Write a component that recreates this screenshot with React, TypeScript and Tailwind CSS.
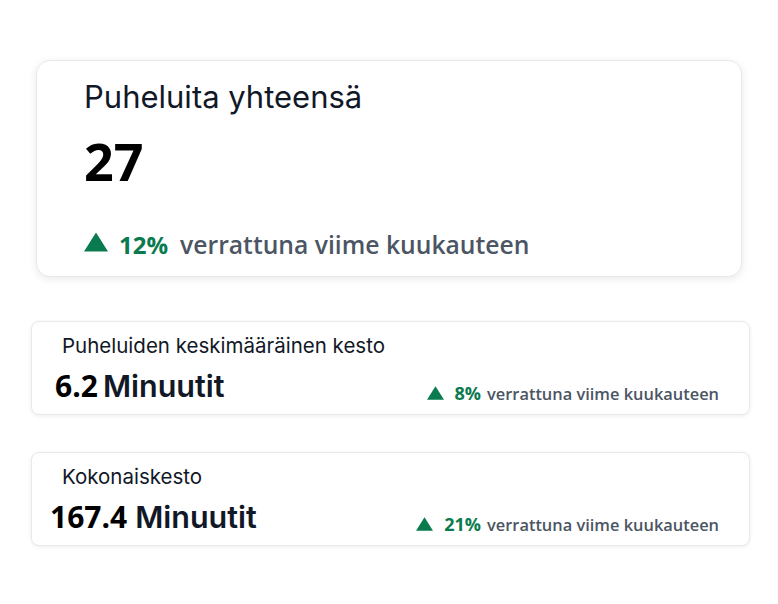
import React from "react";

const sans = { fontFamily: "Inter, 'Noto Sans', sans-serif" };
const open = { fontFamily: "'Open Sans', 'Noto Sans', sans-serif" };

function Up({ className }: { className: string }) {
  return (
    <svg viewBox="0 0 20 16" className={className} aria-hidden>
      <polygon points="10,0 20,16 0,16" fill="#0a7a4f" />
    </svg>
  );
}

type Stat = {
  title: string;
  value: string;
  pct: string;
  valuePad: string;
  gap: string;
};

const stats: Stat[] = [
  { title: "Puheluiden keskimääräinen kesto", value: "6.2", pct: "8%", valuePad: "pl-[23px]", gap: "gap-[5px]" },
  { title: "Kokonaiskesto", value: "167.4", pct: "21%", valuePad: "pl-[18px]", gap: "gap-[8px]" },
];

function SmallCard({ stat }: { stat: Stat }) {
  return (
    <div className="w-[719px] h-[94px] ml-[31px] rounded-[8px] border border-[#e9e9e9] bg-white shadow-[0_1px_4px_rgba(0,0,0,0.07)] flex flex-col">
      <div className="pl-[30px] pt-[12px] text-[20.5px] leading-[24px] text-[#111827]" style={sans}>
        {stat.title}
      </div>
      <div className="flex items-end justify-between pr-[30px] mt-[10px]">
        <div className={`flex items-baseline ${stat.gap} ${stat.valuePad}`}>
          <span className="text-[30px] leading-[36px] font-bold text-black" style={open}>
            {stat.value}
          </span>
          <span className="text-[30.5px] leading-[36px] font-semibold text-[#111827]" style={sans}>
            Minuutit
          </span>
        </div>
        <div className="flex items-baseline leading-[20px] -mb-[2px]">
          <Up className="w-[17px] h-[14px] mr-[11px] mb-[6px]" />
          <span className="text-[18px] font-bold text-[#0a7a4f] mr-[6px]" style={open}>
            {stat.pct}
          </span>
          <span className="text-[16.4px] font-semibold text-[#4b5563]" style={open}>
            verrattuna viime kuukauteen
          </span>
        </div>
      </div>
    </div>
  );
}

export default function App() {
  return (
    <div className="w-[778px] h-[604px] bg-white pt-[60px]">
      <div className="w-[706px] h-[217px] ml-[36px] rounded-[14px] border border-[#e9e9e9] bg-white shadow-[0_2px_8px_rgba(0,0,0,0.09)] flex flex-col pl-[47px]">
        <div className="pt-[19px] text-[31px] leading-[34px] text-[#111827]" style={sans}>
          Puheluita yhteensä
        </div>
        <div className="mt-[21px] text-[52px] leading-[52px] font-bold text-black" style={open}>
          27
        </div>
        <div className="mt-[39px] flex items-center">
          <Up className="w-[24px] h-[20px] mr-[11px] -mt-[6px]" />
          <span className="text-[24px] font-bold text-[#0a7a4f] mr-[12px]" style={open}>
            12%
          </span>
          <span className="text-[24.7px] font-semibold text-[#4b5563]" style={open}>
            verrattuna viime kuukauteen
          </span>
        </div>
      </div>
      <div className="mt-[44px] flex flex-col gap-[37px]">
        {stats.map((s) => (
          <SmallCard key={s.title} stat={s} />
        ))}
      </div>
    </div>
  );
}
